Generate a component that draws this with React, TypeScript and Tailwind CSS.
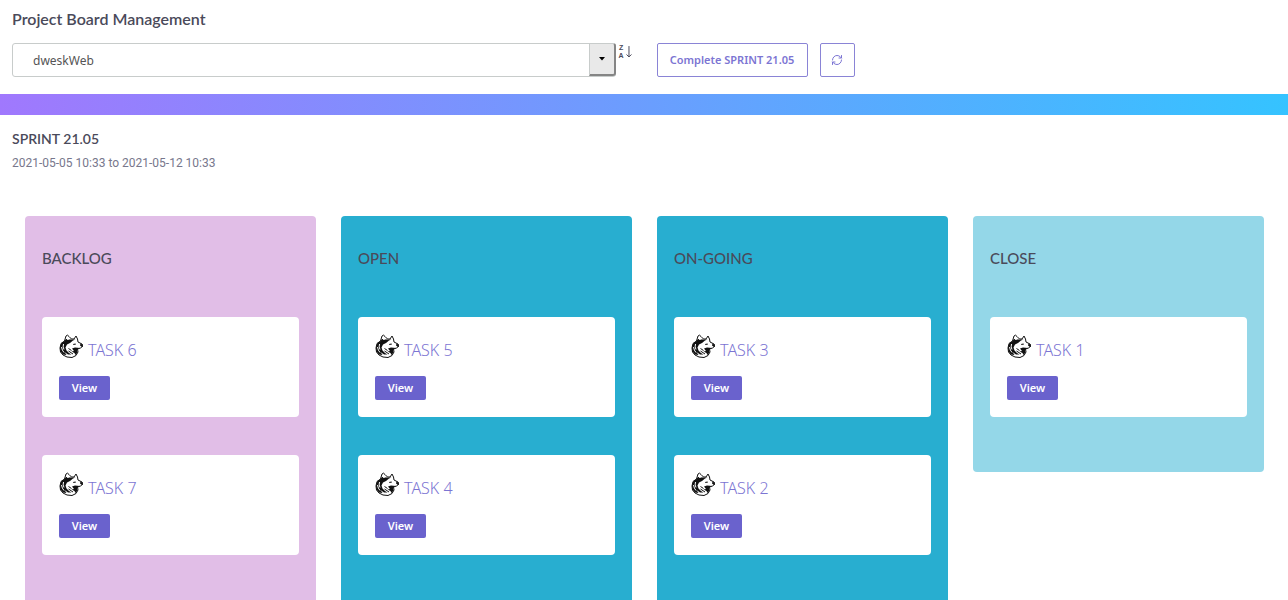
import React from 'react';
import { RefreshCw } from 'lucide-react';

interface Column {
  title: string;
  color: string;
  tasks: string[];
}

const columns: Column[] = [
  { title: 'BACKLOG', color: 'bg-[#e1bee7]', tasks: ['TASK 6', 'TASK 7'] },
  { title: 'OPEN', color: 'bg-[#28aed0]', tasks: ['TASK 5', 'TASK 4'] },
  { title: 'ON-GOING', color: 'bg-[#28aed0]', tasks: ['TASK 3', 'TASK 2'] },
  { title: 'CLOSE', color: 'bg-[#94d7e8]', tasks: ['TASK 1'] },
];

const Husky: React.FC = () => (
  <svg viewBox="0 0 48 48" className="w-6 h-6 shrink-0" aria-hidden="true">
    <path
      d="M11 14 L14 4 Q17 0 20 5 L25 10 L30 10 L34 4 L37 10 L38 16 L46 20 L48 24 L43 28 L37 30 L38 36 L34 43 L26 47 L16 46 L8 42 L3 36 L2 28 L4 19 Z"
      fill="#fff"
      stroke="#111"
      strokeWidth="2"
      strokeLinejoin="round"
    />
    <path
      d="M11 14 L14 10 L24 11 L33 11 L28 13 L22 18 L16 21 L13 27 L15 33 L20 38 L25 41 L18 41 L11 36 L15 42 L8 41 L3 35 L2 27 L5 18 Z"
      fill="#111"
    />
    <path d="M16 12 L17 6 L21 11 Z" fill="#fff" />
    <path d="M5 26 Q6 33 10 37 M9 20 Q7 26 10 31" stroke="#fff" strokeWidth="2" fill="none" />
    <path d="M28 20 L33 19 L34 21 L29 22 Z M43 19 L48 22 L46 26 L42 23 Z" fill="#111" />
    <path d="M26 29 L32 27 L42 28 L36 31 L37 37 L33 42 L31 38 L25 35 L30 34 Z" fill="#111" />
    <path d="M19 29 L25 33 M19 34 L28 40" stroke="#111" strokeWidth="2" fill="none" />
  </svg>
);

const TaskCard: React.FC<{ name: string }> = ({ name }) => (
  <article className="h-[100px] rounded bg-white px-[17px] pt-[17px]">
    <div className="flex h-[30px] items-start gap-[5px]">
      <Husky />
      <h4 className="pt-1 text-base leading-6 font-light text-[#7c75d3]">{name}</h4>
    </div>
    <button
      type="button"
      className="mt-3 h-6 w-[51px] rounded-xs bg-[#6a62cd] text-[11px] font-semibold text-white"
    >
      View
    </button>
  </article>
);

const App: React.FC = () => {
  return (
    <main className="min-h-screen bg-white font-['Noto_Sans','Open_Sans',sans-serif] text-[#4a4a5a]">
      <header className="px-3 pt-2">
        <h1 className="font-[Lato,sans-serif] text-base leading-[22px] font-semibold">Project Board Management</h1>
        <div className="mt-[13px] grid grid-cols-2 gap-[25px] pb-[17px]">
          <div className="flex items-start gap-[3px]">
            <div className="relative flex-1">
              <select
                aria-label="Project"
                defaultValue="dweskWeb"
                className="h-[34px] w-full appearance-none rounded-[3px] border border-[#c8cccb] bg-white pt-0.5 pl-5 text-xs text-[#555]"
              >
                <option>dweskWeb</option>
              </select>
              <span className="pointer-events-none absolute top-0 right-0 flex h-[33px] w-[27px] items-center justify-center rounded-r-[3px] border-t border-r-2 border-b-2 border-l border-t-[#c8cccb] border-r-[#858585] border-b-[#858585] border-l-[#c8cccb] bg-[#e9e9e9]">
                <svg viewBox="0 0 6 4" className="h-1 w-1.5" aria-hidden="true">
                  <path d="M0 0h6L3 3.5z" fill="#000" />
                </svg>
              </span>
            </div>
            <button type="button" aria-label="Sort" className="flex h-[18px] w-[13px] items-center gap-0.5">
              <span className="flex flex-col font-['Liberation_Sans',sans-serif] text-[7px] leading-[8px] font-bold">
                <span>Z</span>
                <span>A</span>
              </span>
              <svg viewBox="0 0 6 12" className="h-3 w-1.5" fill="none" stroke="currentColor" aria-hidden="true">
                <path d="M3 0v11M.5 8.5L3 11l2.5-2.5" />
              </svg>
            </button>
          </div>
          <div className="flex gap-3">
            <button
              type="button"
              className="h-[34px] w-[151px] rounded-xs border border-[#8a84d6] text-[11px] font-semibold text-[#7c75d3]"
            >
              Complete SPRINT 21.05
            </button>
            <button
              type="button"
              aria-label="Refresh"
              className="flex h-[34px] w-[35px] items-center justify-center rounded-xs border border-[#8a84d6] text-[#7c75d3]"
            >
              <RefreshCw className="h-3 w-3" />
            </button>
          </div>
        </div>
      </header>

      <div className="h-[21px] bg-linear-to-r/srgb from-[#a078fd] to-[#35c3ff]" />

      <section className="px-3 pt-3">
        <h2 className="font-[Lato,sans-serif] text-sm leading-6 font-semibold">SPRINT 21.05</h2>
        <p className="font-[Roboto,sans-serif] text-xs leading-6 text-[#77778c]">2021-05-05 10:33 to 2021-05-12 10:33</p>
      </section>

      <div className="grid grid-cols-4 items-start gap-[25px] pt-[41px] pr-6 pb-6 pl-[25px]">
        {columns.map((column) => (
          <section key={column.title} className={`rounded px-[17px] pt-[30px] pb-[55px] ${column.color}`}>
            <h3 className="font-[Lato,sans-serif] text-[15px] leading-6 font-medium">{column.title}</h3>
            <div className="mt-[47px] flex flex-col gap-[38px]">
              {column.tasks.map((task) => (
                <TaskCard key={task} name={task} />
              ))}
            </div>
          </section>
        ))}
      </div>
    </main>
  );
};

export default App;
